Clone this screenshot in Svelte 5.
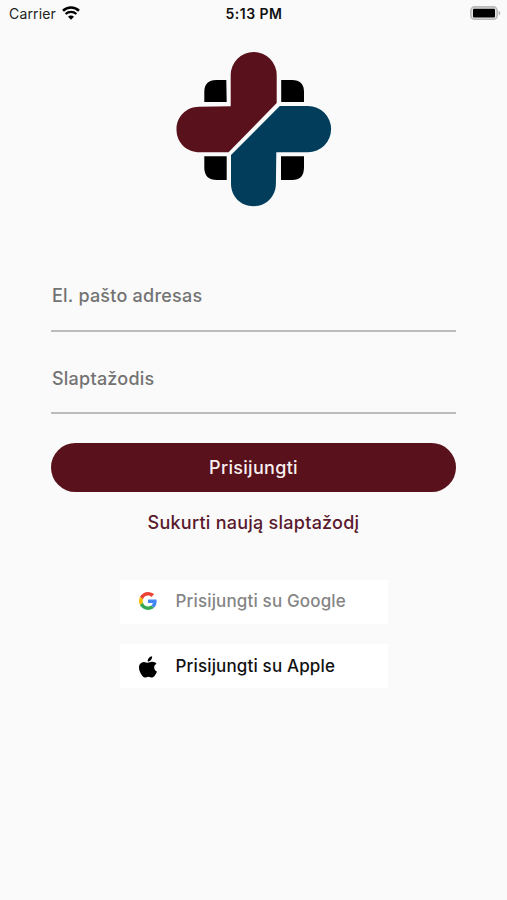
<script>
	let email = "";
	let password = "";
</script>

<div id="screen">
	<div id="status">
		<div class="carrier">
			<span>Carrier</span>
			<svg width="18" height="14" viewBox="0 0 18 14" fill="none" stroke="#000">
				<path d="M1 4.7a11.6 11.6 0 0 1 16 0" stroke-width="2.6" />
				<path d="M3.6 8a7.8 7.8 0 0 1 10.8 0" stroke-width="2.3" />
				<path d="M9 13.8 6 10.700a4.200 4.200 0 0 1 6 0z" fill="#000" stroke="none" />
			</svg>
		</div>
		<div class="time">5:13 PM</div>
		<div class="battery">
			<svg width="31" height="15" viewBox="0 0 31 15">
				<rect x="0.9" y="0.9" width="26.2" height="12.4" rx="3.6" fill="#e4e4e4" stroke="#b9b9b9" stroke-width="1.6" />
				<rect x="3" y="2.8" width="22" height="8.8" rx="1" fill="#000" />
				<path d="M28.6 4.8c2.2.8 2.2 3.8 0 4.6z" fill="#b0b0b0" />
			</svg>
		</div>
	</div>

	<svg class="logo" width="156" height="156" viewBox="11 11 156 156">
		<path d="M39.3 62V52q0-12 12-12h10l.4 22z" />
		<path d="M116.2 62V40h10.8q12 0 12 12v10z" />
		<path d="M39.3 116.3h22.4V140H52q-12.7 0-12.7-12.5z" />
		<path d="M116 116.3h23v11.2q0 12.5-12 12.5h-11z" />
		<path
			fill="#59111b"
			d="M65.7 35a23 23 0 0 1 46 0v28L63.5 112.3H35c-14 0-23.5-10-23.5-22.8S21 67 34 66.8l31.7-.6z"
		/>
		<path
			fill="#023e5c"
			d="M114.8 66H143a23 23 0 0 1 0 46.2h-31.7l-.4 31.8c-.3 13-10 22.2-22.4 22.2S66 157 66 143.5V115z"
		/>
	</svg>

	<form on:submit|preventDefault>
		<input type="text" placeholder="El. pašto adresas" bind:value={email} />
		<input class="password" type="password" placeholder="Slaptažodis" bind:value={password} />
		<button class="login">Prisijungti</button>
	</form>

	<div class="reset">Sukurti naują slaptažodį</div>

	<button class="social google">
		<svg width="18" height="18" viewBox="0 0 48 48">
			<path fill="#ea4335" d="M24 9.5c3.54 0 6.71 1.22 9.21 3.6l6.85-6.85C35.9 2.38 30.47 0 24 0 14.62 0 6.51 5.38 2.56 13.22l7.98 6.19C12.43 13.72 17.74 9.5 24 9.5z" />
			<path fill="#4285f4" d="M46.98 24.55c0-1.57-.15-3.09-.38-4.55H24v9.02h12.94c-.58 2.96-2.26 5.48-4.78 7.18l7.73 6c4.51-4.18 7.09-10.36 7.09-17.65z" />
			<path fill="#fbbc05" d="M10.53 28.59A14.5 14.5 0 0 1 9.77 24c0-1.6.27-3.14.76-4.59l-7.98-6.19A24 24 0 0 0 0 24c0 3.88.92 7.54 2.56 10.78z" />
			<path fill="#34a853" d="M24 48c6.48 0 11.93-2.13 15.89-5.81l-7.73-6c-2.15 1.45-4.92 2.3-8.16 2.3-6.26 0-11.57-4.22-13.47-9.91l-7.98 6.19C6.51 42.62 14.62 48 24 48z" />
		</svg>
		<span>Prisijungti su Google</span>
	</button>

	<button class="social apple">
		<svg width="20" height="22" viewBox="0 0 20 22">
			<path d="M14.1.3c.2 1.5-.4 2.8-1.2 3.7-.8 1-2 1.6-3.2 1.5-.2-1.4.5-2.7 1.2-3.5C11.7 1.1 13 .4 14.1.3z" />
			<path d="M18.5 7.7c-1.5.9-2.3 2.1-2.3 3.8 0 1.9 1.1 3.4 2.8 4.1-.4 1.2-1 2.4-1.8 3.5-.9 1.4-1.8 2.5-3.2 2.5s-1.8-.8-3.5-.8-2.2.8-3.5.8c-1.4 0-2.4-1.2-3.3-2.5C1.4 15.8.1 11.4 1.7 8.6c.9-1.7 2.5-2.7 4.2-2.7 1.6 0 2.8.9 3.9.9 1 0 2.5-1.1 4.4-1 1.7.1 3.3.7 4.3 1.9z" />
		</svg>
		<span>Prisijungti su Apple</span>
	</button>
</div>

<style>
	:global(body) {
		background: #fafafa;
	}

	#screen {
		height: 900px;
		display: flex;
		flex-direction: column;
		align-items: center;
		background: #fafafa;
		font-family: "Inter", "Liberation Sans", sans-serif;
		overflow: hidden;
	}

	#status {
		box-sizing: border-box;
		width: 100%;
		height: 26px;
		padding: 0 6px 0 9px;
		display: grid;
		grid-template-columns: 1fr auto 1fr;
		align-items: center;
		font-size: 14px;
		color: #222;
	}

	.carrier {
		display: flex;
		align-items: center;
		gap: 6px;
		letter-spacing: 0.15px;
	}

	.time {
		color: #111;
		font-weight: 600;
		letter-spacing: 0.5px;
		margin-right: 2px;
	}

	.battery {
		display: flex;
		justify-content: flex-end;
	}

	.logo {
		margin-top: 25px;
	}

	form {
		width: 405px;
		margin-top: 55px;
		display: flex;
		flex-direction: column;
	}

	input {
		box-sizing: border-box;
		height: 70px;
		margin-bottom: 12px;
		padding: 0 0 2px 1px;
		border: none;
		border-bottom: 2px solid #bbb;
		outline: none;
		background: none;
		font: 500 18px "Inter", sans-serif;
		letter-spacing: 0.23px;
	}

	.password {
		padding-bottom: 0;
	}

	input::placeholder {
		color: #737373;
		opacity: 1;
	}

	button {
		border: none;
		cursor: pointer;
		font: 500 18px "Inter", sans-serif;
		letter-spacing: 0.3px;
	}

	.login {
		height: 49px;
		margin-top: 17px;
		border-radius: 25px;
		background: #59111b;
		color: #f8eff0;
	}

	.reset {
		margin-top: 19px;
		line-height: 24px;
		font-size: 18px;
		font-weight: 500;
		letter-spacing: 0.25px;
		color: #59192c;
	}

	.social {
		width: 268px;
		height: 44px;
		padding: 0 0 0 19px;
		display: flex;
		align-items: center;
		background: #fff;
		font-size: 17px;
		letter-spacing: 0.15px;
	}

	.social svg {
		flex: none;
	}

	.google {
		margin-top: 45px;
		padding-bottom: 2px;
		color: #858585;
	}

	.google span {
		margin-left: 19px;
	}

	.apple {
		margin-top: 20px;
		padding-left: 18px;
		color: #111;
	}

	.apple svg {
		margin-top: 1px;
	}

	.apple span {
		margin-left: 18px;
	}
</style>
